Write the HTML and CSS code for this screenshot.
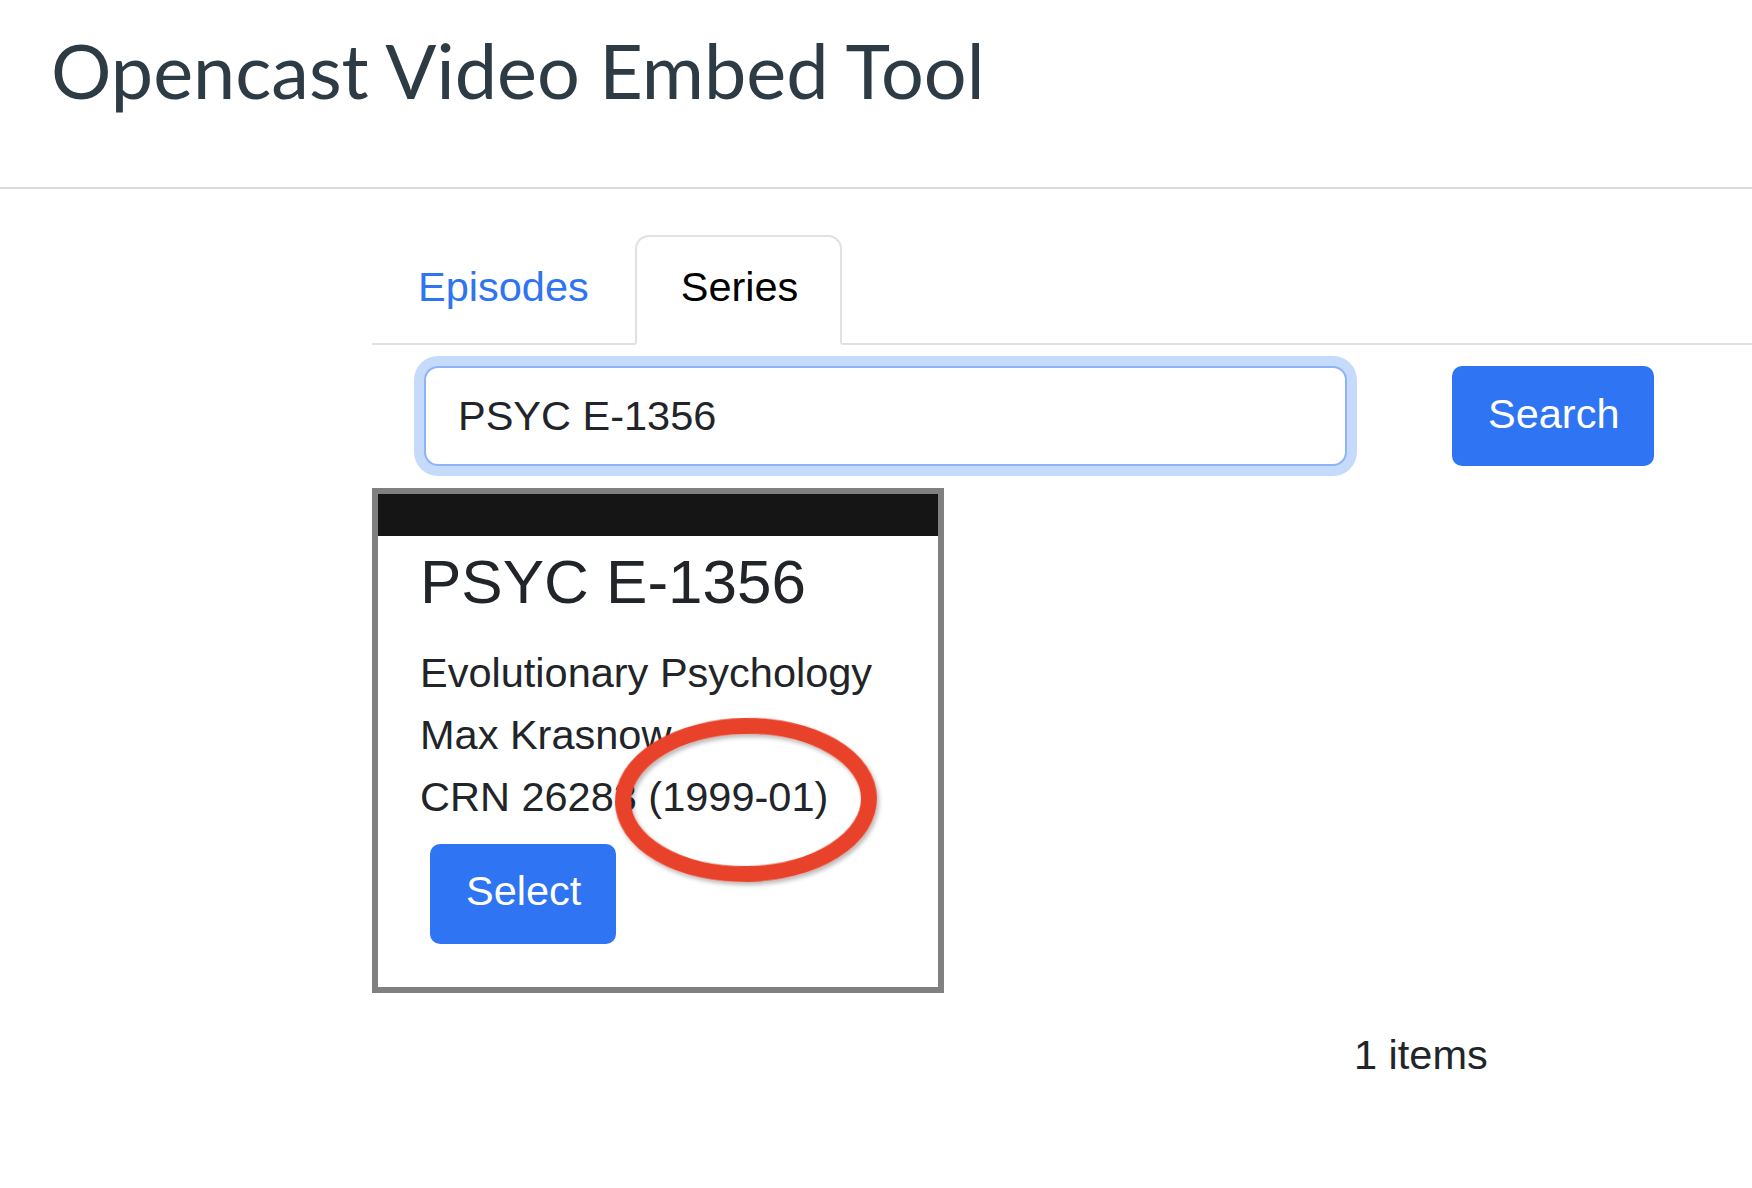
FILE: index.html
```html
<!DOCTYPE html>
<html lang="en">
<head>
<meta charset="utf-8">
<title>Opencast Video Embed Tool</title>
<link rel="stylesheet" href="styles.css">
</head>
<body>
<header class="app-header">
  <h1 class="app-title">Opencast Video Embed Tool</h1>
</header>
<main class="main">
  <ul class="tabs">
    <li class="tab"><a class="tab-link" href="#">Episodes</a></li>
    <li class="tab tab-active"><span class="tab-link">Series</span></li>
  </ul>
  <div class="search-row">
    <input class="search-input" type="text" value="PSYC E-1356">
    <button class="btn btn-search" type="button">Search</button>
  </div>
  <div class="card">
    <div class="card-thumb"></div>
    <div class="card-body">
      <h2 class="card-title">PSYC E-1356</h2>
      <p class="card-line">Evolutionary Psychology</p>
      <p class="card-line">Max Krasnow</p>
      <p class="card-line">CRN 26283 (1999-01)</p>
      <button class="btn btn-select" type="button">Select</button>
    </div>
  </div>
  <div class="count">1 items</div>
</main>
<svg class="annotation" width="300" height="200" viewBox="0 0 300 200" aria-hidden="true">
  <defs>
    <filter id="sh" x="-20%" y="-20%" width="140%" height="140%">
      <feDropShadow dx="2" dy="3" stdDeviation="2" flood-color="#000" flood-opacity="0.28"/>
    </filter>
  </defs>
  <ellipse cx="146" cy="100" rx="123" ry="74" fill="none" stroke="#e9422a" stroke-width="16" filter="url(#sh)" transform="rotate(-1 146 100)"/>
</svg>
</body>
</html>
```
FILE: styles.css
```css
html, body {
  margin: 0;
  padding: 0;
  background: #fff;
}
body {
  position: relative;
  font-family: "Liberation Sans", Arial, sans-serif;
  font-size: 41.5px;
  line-height: 62px;
  color: #212529;
  width: 1752px;
  min-height: 1188px;
}
.app-header {
  padding: 25px 0 71px 51px;
  border-bottom: 2px solid #d9dde1;
}
.app-title {
  margin: 0;
  font-family: Lato, "Liberation Sans", sans-serif;
  font-weight: 400;
  font-size: 75.6px;
  line-height: 1.2;
  color: #2d3b45;
}
.main {
  padding: 46px 0 0 372px;
}
.tabs {
  display: flex;
  list-style: none;
  margin: 0;
  padding: 0;
  border-bottom: 2px solid #dee2e6;
}
.tab {
  margin-bottom: -2px;
  border: 2px solid transparent;
  border-radius: 14px 14px 0 0;
}
.tab-active {
  border-color: #dee2e6 #dee2e6 #fff;
  background: #fff;
}
.tab-link {
  display: block;
  padding: 19px 44px 25px;
  color: #2f74f0;
  text-decoration: none;
}
.tab-active .tab-link {
  padding-right: 42px;
  color: #000;
}
.search-row {
  display: flex;
  align-items: flex-start;
  padding-top: 21px;
}
.search-input {
  box-sizing: border-box;
  width: 923px;
  height: 100px;
  margin: 0 0 0 52px;
  padding: 0 32px;
  border: 2px solid #8cb5f6;
  border-radius: 14px;
  box-shadow: 0 0 0 10px #c6dafb;
  outline: none;
  font-family: "Liberation Sans", Arial, sans-serif;
  font-size: 41.5px;
  color: #212529;
  background: #fff;
}
.btn {
  box-sizing: border-box;
  height: 100px;
  padding: 17px 36px 21px;
  border: none;
  border-radius: 10px;
  background: #2f74f2;
  color: #fff;
  font-family: "Liberation Sans", Arial, sans-serif;
  font-size: 41.5px;
  line-height: 62px;
}
.btn-search {
  width: 202px;
  margin-left: 105px;
}
.card {
  box-sizing: border-box;
  width: 572px;
  margin-top: 22px;
  border: 6px solid #808080;
  background: #fff;
}
.card-thumb {
  height: 42px;
  background: #151515;
}
.card-body {
  padding: 9px 42px 43px;
}
.card-title {
  margin: 0 0 24px;
  font-weight: 400;
  font-size: 62px;
  line-height: 1.18;
  color: #212529;
}
.card-line {
  margin: 0;
}
.btn-select {
  display: block;
  width: 186px;
  margin: 16px 0 0 10px;
  padding-top: 16px;
  padding-bottom: 22px;
}
.count {
  margin: 31px 0 0 982px;
}
.annotation {
  position: absolute;
  left: 600px;
  top: 700px;
}
```
